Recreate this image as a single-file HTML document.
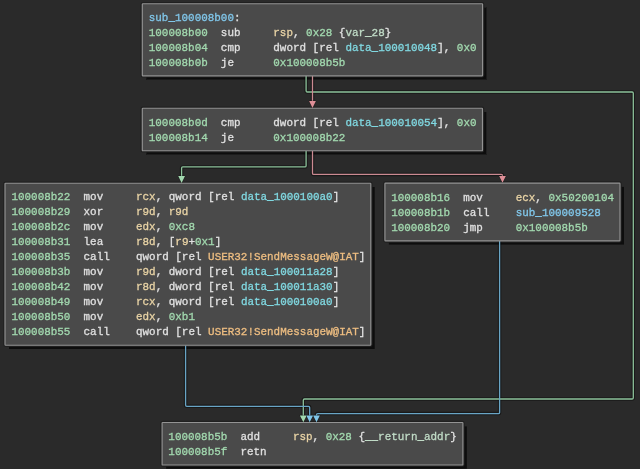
<!DOCTYPE html>
<html><head><meta charset="utf-8">
<style>
html,body{margin:0;padding:0;}
body{width:640px;height:469px;background:#2a2a2a;position:relative;overflow:hidden;}
svg{position:absolute;left:0;top:0;}
.t{position:absolute;white-space:pre;color:#e0e0e0;font-family:"Liberation Mono",monospace;font-size:10.93px;line-height:15.0000px;transform:scaleY(1.03);transform-origin:0 0;-webkit-text-stroke:0.3px;}
.a{color:#a2d9af}.r{color:#e8d3a5}.g{color:#a2d9af}.d{color:#80d8e1}.s{color:#80c6e9}.i{color:#edbd81}.v{color:#c1dcc7}
</style></head><body>

<svg width="640" height="469" viewBox="0 0 640 469">
<defs><filter id="sh" x="-10%" y="-10%" width="120%" height="120%"><feGaussianBlur stdDeviation="0.5"/></filter></defs>
<g fill="#0f0f0f" filter="url(#sh)">
<rect x="146.30" y="7.50" width="340.30" height="72.15"/>
<rect x="146.30" y="112.00" width="340.20" height="42.60"/>
<rect x="9.00" y="187.00" width="365.80" height="162.00"/>
<rect x="388.90" y="186.90" width="235.10" height="57.80"/>
<rect x="166.10" y="426.30" width="300.80" height="42.50"/>
</g>
<g fill="none" stroke="#202020" stroke-width="3.5">
<rect x="142.30" y="3.70" width="340.30" height="72.15" rx="0.6"/>
<rect x="142.30" y="108.20" width="340.20" height="42.60" rx="0.6"/>
<rect x="5.00" y="183.20" width="365.80" height="162.00" rx="0.6"/>
<rect x="384.90" y="183.10" width="235.10" height="57.80" rx="0.6"/>
<rect x="162.10" y="422.50" width="300.80" height="42.50" rx="0.6"/>
</g>
<g fill="none" stroke-linejoin="round">
<path d="M306.1 75.85 L306.10 90.80 Q306.1 92.0 307.30 92.00 L632.10 92.00 Q633.3 92.0 633.30 93.20 L633.30 397.80 Q633.3 399.0 632.10 399.00 L304.50 399.00 Q303.3 399.0 303.30 400.20 L303.3 415.7" stroke="#000000" stroke-opacity="0.4" stroke-width="3.5"/>
<path d="M312.5 75.85 L312.5 101.4" stroke="#000000" stroke-opacity="0.4" stroke-width="3.5"/>
<path d="M306.1 150.8 L306.10 165.70 Q306.1 166.9 304.90 166.90 L182.80 166.90 Q181.6 166.9 181.60 168.10 L181.6 176.39999999999998" stroke="#000000" stroke-opacity="0.4" stroke-width="3.5"/>
<path d="M312.5 150.8 L312.50 173.20 Q312.5 174.4 313.70 174.40 L501.30 174.40 Q502.5 174.4 502.50 175.60 L502.5 176.29999999999998" stroke="#000000" stroke-opacity="0.4" stroke-width="3.5"/>
<path d="M185.6 345.2 L185.60 405.10 Q185.6 406.3 186.80 406.30 L308.50 406.30 Q309.7 406.3 309.70 407.50 L309.7 415.7" stroke="#000000" stroke-opacity="0.4" stroke-width="3.5"/>
<path d="M499.6 240.9 L499.60 412.40 Q499.6 413.6 498.40 413.60 L317.70 413.60 Q316.5 413.6 316.50 414.80 L316.5 415.7" stroke="#000000" stroke-opacity="0.4" stroke-width="3.5"/>
<path d="M306.1 75.85 L306.10 90.80 Q306.1 92.0 307.30 92.00 L632.10 92.00 Q633.3 92.0 633.30 93.20 L633.30 397.80 Q633.3 399.0 632.10 399.00 L304.50 399.00 Q303.3 399.0 303.30 400.20 L303.3 415.7" stroke="#8cc29a" stroke-width="1.3"/>
<path d="M312.5 75.85 L312.5 101.4" stroke="#cc8a92" stroke-width="1.3"/>
<path d="M306.1 150.8 L306.10 165.70 Q306.1 166.9 304.90 166.90 L182.80 166.90 Q181.6 166.9 181.60 168.10 L181.6 176.39999999999998" stroke="#8cc29a" stroke-width="1.3"/>
<path d="M312.5 150.8 L312.50 173.20 Q312.5 174.4 313.70 174.40 L501.30 174.40 Q502.5 174.4 502.50 175.60 L502.5 176.29999999999998" stroke="#cc8a92" stroke-width="1.3"/>
<path d="M185.6 345.2 L185.60 405.10 Q185.6 406.3 186.80 406.30 L308.50 406.30 Q309.7 406.3 309.70 407.50 L309.7 415.7" stroke="#69a5c5" stroke-width="1.3"/>
<path d="M499.6 240.9 L499.60 412.40 Q499.6 413.6 498.40 413.60 L317.70 413.60 Q316.5 413.6 316.50 414.80 L316.5 415.7" stroke="#69a5c5" stroke-width="1.3"/>
</g>
<path d="M299.90 415.40 L306.70 415.40 L303.30 422.20 Z" fill="#a2d9af" stroke="#000000" stroke-opacity="0.5" stroke-width="0.8" paint-order="stroke"/>
<path d="M309.10 101.10 L315.90 101.10 L312.50 107.90 Z" fill="#de8f97" stroke="#000000" stroke-opacity="0.5" stroke-width="0.8" paint-order="stroke"/>
<path d="M178.20 176.10 L185.00 176.10 L181.60 182.90 Z" fill="#a2d9af" stroke="#000000" stroke-opacity="0.5" stroke-width="0.8" paint-order="stroke"/>
<path d="M499.10 176.00 L505.90 176.00 L502.50 182.80 Z" fill="#de8f97" stroke="#000000" stroke-opacity="0.5" stroke-width="0.8" paint-order="stroke"/>
<path d="M306.30 415.40 L313.10 415.40 L309.70 422.20 Z" fill="#80c6e9" stroke="#000000" stroke-opacity="0.5" stroke-width="0.8" paint-order="stroke"/>
<path d="M313.10 415.40 L319.90 415.40 L316.50 422.20 Z" fill="#80c6e9" stroke="#000000" stroke-opacity="0.5" stroke-width="0.8" paint-order="stroke"/>
<rect x="142.30" y="3.70" width="340.30" height="72.15" rx="0.6" fill="#4a4a4a" stroke="#939393" stroke-width="1.15"/>
<rect x="142.30" y="108.20" width="340.20" height="42.60" rx="0.6" fill="#4a4a4a" stroke="#939393" stroke-width="1.15"/>
<rect x="5.00" y="183.20" width="365.80" height="162.00" rx="0.6" fill="#4a4a4a" stroke="#939393" stroke-width="1.15"/>
<rect x="384.90" y="183.10" width="235.10" height="57.80" rx="0.6" fill="#4a4a4a" stroke="#939393" stroke-width="1.15"/>
<rect x="162.10" y="422.50" width="300.80" height="42.50" rx="0.6" fill="#4a4a4a" stroke="#939393" stroke-width="1.15"/>
</svg>
<div class="t" style="left:148.75px;top:10.69px;"><span class="s">sub_100008b00</span>:</div>
<div class="t" style="left:148.75px;top:25.69px;"><span class="a">100008b00</span>  sub     <span class="r">rsp</span>, <span class="g">0x28</span> {<span class="v">var_28</span>}</div>
<div class="t" style="left:148.75px;top:40.69px;"><span class="a">100008b04</span>  cmp     dword [rel <span class="d">data_100010048</span>], <span class="g">0x0</span></div>
<div class="t" style="left:148.75px;top:55.69px;"><span class="a">100008b0b</span>  je      <span class="g">0x100008b5b</span></div>
<div class="t" style="left:148.75px;top:115.69px;"><span class="a">100008b0d</span>  cmp     dword [rel <span class="d">data_100010054</span>], <span class="g">0x0</span></div>
<div class="t" style="left:148.75px;top:130.69px;"><span class="a">100008b14</span>  je      <span class="g">0x100008b22</span></div>
<div class="t" style="left:11.45px;top:190.49px;"><span class="a">100008b22</span>  mov     <span class="r">rcx</span>, qword [rel <span class="d">data_1000100a0</span>]</div>
<div class="t" style="left:11.45px;top:205.49px;"><span class="a">100008b29</span>  xor     <span class="r">r9d</span>, <span class="r">r9d</span></div>
<div class="t" style="left:11.45px;top:220.49px;"><span class="a">100008b2c</span>  mov     <span class="r">edx</span>, <span class="g">0xc8</span></div>
<div class="t" style="left:11.45px;top:235.49px;"><span class="a">100008b31</span>  lea     <span class="r">r8d</span>, [<span class="r">r9</span>+<span class="g">0x1</span>]</div>
<div class="t" style="left:11.45px;top:250.49px;"><span class="a">100008b35</span>  call    qword [rel <span class="i">USER32!SendMessageW@IAT</span>]</div>
<div class="t" style="left:11.45px;top:265.49px;"><span class="a">100008b3b</span>  mov     <span class="r">r9d</span>, dword [rel <span class="d">data_100011a28</span>]</div>
<div class="t" style="left:11.45px;top:280.49px;"><span class="a">100008b42</span>  mov     <span class="r">r8d</span>, dword [rel <span class="d">data_100011a30</span>]</div>
<div class="t" style="left:11.45px;top:295.49px;"><span class="a">100008b49</span>  mov     <span class="r">rcx</span>, qword [rel <span class="d">data_1000100a0</span>]</div>
<div class="t" style="left:11.45px;top:310.49px;"><span class="a">100008b50</span>  mov     <span class="r">edx</span>, <span class="g">0xb1</span></div>
<div class="t" style="left:11.45px;top:325.49px;"><span class="a">100008b55</span>  call    qword [rel <span class="i">USER32!SendMessageW@IAT</span>]</div>
<div class="t" style="left:391.15px;top:190.99px;"><span class="a">100008b16</span>  mov     <span class="r">ecx</span>, <span class="g">0x50200104</span></div>
<div class="t" style="left:391.15px;top:205.99px;"><span class="a">100008b1b</span>  call    <span class="s">sub_100009528</span></div>
<div class="t" style="left:391.15px;top:220.99px;"><span class="a">100008b20</span>  jmp     <span class="g">0x100008b5b</span></div>
<div class="t" style="left:168.35px;top:430.29px;"><span class="a">100008b5b</span>  add     <span class="r">rsp</span>, <span class="g">0x28</span> {<span class="v">__return_addr</span>}</div>
<div class="t" style="left:168.35px;top:445.29px;"><span class="a">100008b5f</span>  retn    </div>
</body></html>
